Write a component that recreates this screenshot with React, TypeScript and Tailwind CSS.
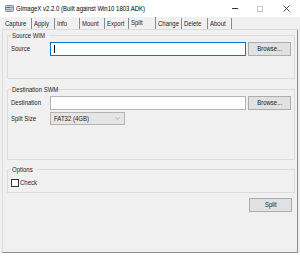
import { ChevronDown } from 'lucide-react';

const tabs = [
  { label: 'Capture', w: 'w-[29px]' },
  { label: 'Apply', w: 'w-[23px]' },
  { label: 'Info', w: 'w-[25px]' },
  { label: 'Mount', w: 'w-[25px]' },
  { label: 'Export', w: 'w-[24px]' },
  { label: 'Split', w: 'w-[27px]', active: true },
  { label: 'Change', w: 'w-[26px]' },
  { label: 'Delete', w: 'w-[26px]' },
  { label: 'About', w: 'w-[24px]' },
];

// the screenshot is squeezed sideways, so text gets narrowed to match
function T({ children, center }: { children: React.ReactNode; center?: boolean }) {
  return (
    <span className={`inline-block whitespace-nowrap scale-x-75 ${center ? 'origin-center' : 'origin-left'}`}>
      {children}
    </span>
  );
}

function Button({ label }: { label: string }) {
  return (
    <button
      type="button"
      className="flex h-[14px] w-[43px] items-center justify-center border border-[#adadad] bg-[#e1e1e1] text-[8px] leading-none text-[#222]"
    >
      <T center>{label}</T>
    </button>
  );
}

function AppIcon() {
  return (
    <svg className="h-[9px] w-[9px]" viewBox="0 0 9 9">
      <rect x="0.5" y="1.5" width="8" height="6" rx="1" fill="#c9ced6" stroke="#7d8796" />
      <rect x="1.5" y="3" width="4" height="1" fill="#5b6778" />
      <rect x="1.5" y="5" width="5" height="1" fill="#8a95a6" />
      <circle cx="7" cy="3.5" r="0.8" fill="#4a90d9" />
    </svg>
  );
}

export default function App() {
  return (
    <div className="flex h-[257px] w-[300px] flex-col overflow-hidden bg-[#f0f0f0] font-['Liberation_Sans',Arial,sans-serif] text-[8px] text-[#1e1e1e]">
      {/* title bar */}
      <div className="flex h-[17px] shrink-0 items-center bg-white pl-[5px]">
        <AppIcon />
        <span className="ml-[2px] text-[8px] leading-none text-black">
          <T>GImageX v2.2.0 (Built against Win10 1803 ADK)</T>
        </span>
        <div className="ml-auto flex h-full items-center">
          <span className="mr-[19px] block h-px w-[6px] bg-[#333]" />
          <span className="mr-[20px] block h-[6px] w-[6px] border border-[#c8c8c8]" />
          <svg className="mr-[10px] h-[7px] w-[7px]" viewBox="0 0 7 7">
            <path d="M0.5 0.5L6.5 6.5M6.5 0.5L0.5 6.5" stroke="#333" strokeWidth="0.9" />
          </svg>
        </div>
      </div>

      {/* tabs */}
      <div className="flex h-[12px] shrink-0 items-end pl-[3px]">
        {tabs.map((t) =>
          t.active ? (
            <div key={t.label} className={`${t.w} flex h-[12px] shrink-0 items-start border-r border-[#8c8c8c] pl-[2px] pt-[1px] leading-[9px]`}>
              <T>{t.label}</T>
            </div>
          ) : (
            <div key={t.label} className={`${t.w} flex h-[11px] shrink-0 items-center border-r border-[#8c8c8c] pl-[2px] leading-none`}>
              <T>{t.label}</T>
            </div>
          ),
        )}
      </div>

      {/* tab panel */}
      <div className="ml-[2px] flex h-[224px] w-[296px] shrink-0 flex-col border border-[#dcdcdc] border-r-[#8f8f8f] border-b-[#8f8f8f] pl-[4px]">
        <fieldset className="mt-[1px] h-[48px] w-[288px] border border-[#dcdcdc] pl-[3px]">
          <legend className="w-[38px] px-[1px] leading-[9px]"><T>Source WIM</T></legend>
          <div className="mt-[2px] flex h-[14px] items-center">
            <span className="w-[39px]"><T>Source</T></span>
            <div className="flex h-[14px] w-[196px] items-center border border-[#0078d7] bg-white pl-[3px]">
              <span className="block h-[8px] w-px bg-black" />
            </div>
            <div className="ml-[2px]">
              <Button label="Browse..." />
            </div>
          </div>
        </fieldset>

        <fieldset className="mt-[6px] h-[75px] w-[288px] border border-[#dcdcdc] pl-[3px]">
          <legend className="w-[43px] px-[1px] leading-[9px]"><T>Destination SWM</T></legend>
          <div className="mt-[2px] flex h-[14px] items-center">
            <span className="w-[39px]"><T>Destination</T></span>
            <div className="h-[14px] w-[196px] border border-[#b4b4b4] bg-white" />
            <div className="ml-[2px]">
              <Button label="Browse..." />
            </div>
          </div>
          <div className="mt-[2px] flex h-[13px] items-center">
            <span className="w-[39px]"><T>Split Size</T></span>
            <div className="flex h-[13px] w-[75px] items-center justify-between border border-[#b4b4b4] bg-[#e5e5e5] pl-[3px] pr-[3px]">
              <T>FAT32 (4GB)</T>
              <ChevronDown className="h-[7px] w-[7px] text-[#777]" strokeWidth={1.5} />
            </div>
          </div>
        </fieldset>

        <fieldset className="mt-[5px] h-[28px] w-[288px] border border-[#dcdcdc] pl-[3px]">
          <legend className="w-[25px] px-[1px] leading-[9px]"><T>Options</T></legend>
          <label className="mt-[3px] flex items-center">
            <span className="block h-[8px] w-[8px] border border-[#333] bg-white" />
            <span className="ml-[1px]"><T>Check</T></span>
          </label>
        </fieldset>

        <div className="mt-[5px] flex justify-end pr-[5px]">
          <Button label="Split" />
        </div>
      </div>

      <div className="flex-1 bg-white" />
    </div>
  );
}
